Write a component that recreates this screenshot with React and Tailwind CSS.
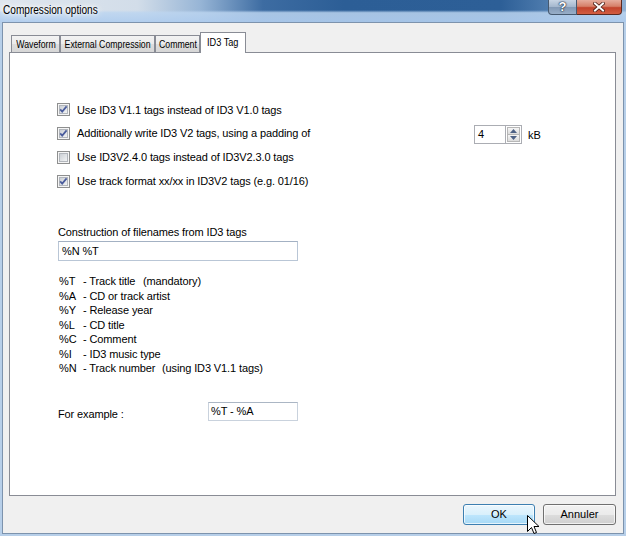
import React from 'react';

const FONT = "font-['Liberation_Sans',Arial,sans-serif]";

function CheckBox({ checked }) {
  return (
    <svg width="13" height="13" viewBox="0 0 13 13" className="shrink-0">
      <defs>
        <linearGradient id="cbg" x1="0" y1="0" x2="1" y2="1">
          <stop offset="0" stopColor="#c9cdd3" />
          <stop offset="1" stopColor="#f4f5f6" />
        </linearGradient>
      </defs>
      <rect x="0.5" y="0.5" width="12" height="12" fill="#f5f5f5" stroke="#8e8f8f" />
      <rect x="2.5" y="2.5" width="8" height="8" fill="url(#cbg)" stroke="#b2b6bc" />
      {checked && (
        <path d="M3.2 6.4 L5.2 8.6 L9.6 3.4" fill="none" stroke="#4a5c9c" strokeWidth="1.7" />
      )}
    </svg>
  );
}

function Tab({ label, width, selected }) {
  if (selected) {
    return (
      <div
        className={`relative z-10 -mb-px flex h-[21px] items-start justify-center border border-b-0 border-[#898c95] bg-white ${width}`}
      >
        <span className="mt-[2px] inline-block scale-x-[0.8] text-[11.5px] leading-[14px] whitespace-nowrap">
          {label}
        </span>
      </div>
    );
  }
  return (
    <div
      className={`flex h-[17px] items-start justify-center border border-b-0 border-[#898c95] bg-[linear-gradient(180deg,#f3f3f3,#ebebeb_50%,#dedede_51%,#d6d6d6)] ${width}`}
    >
      <span className="mt-[1px] inline-block scale-x-[0.76] text-[11.5px] leading-[14px] whitespace-nowrap">
        {label}
      </span>
    </div>
  );
}

function Spinner() {
  return (
    <div className="mt-[4px] flex h-[19px] self-start">
      <div className="h-full w-[31px] border border-r-0 border-[#abadb3] bg-white pl-[3px] text-[11px] leading-[17px]">
        4
      </div>
      <div className="flex h-full w-[17px] flex-col border border-[#abadb3] bg-white p-px">
        <div className="flex h-[8px] items-center justify-center border border-[#b7b7b7] bg-[linear-gradient(180deg,#f6f6f6,#dcdcdc)]">
          <svg width="7" height="4" viewBox="0 0 7 4">
            <path d="M0 4 L3.5 0 L7 4 Z" fill="#4d6185" />
          </svg>
        </div>
        <div className="flex h-[8px] items-center justify-center border border-t-0 border-[#b7b7b7] bg-[linear-gradient(180deg,#f6f6f6,#dcdcdc)]">
          <svg width="7" height="4" viewBox="0 0 7 4">
            <path d="M0 0 L3.5 4 L7 0 Z" fill="#4d6185" />
          </svg>
        </div>
      </div>
      <span className="ml-[6px] self-center text-[11px] leading-[14px]">kB</span>
    </div>
  );
}

const options = [
  { label: 'Use ID3 V1.1 tags instead of ID3 V1.0 tags', checked: true },
  { label: 'Additionally write ID3 V2 tags, using a padding of', checked: true, spinner: true },
  { label: 'Use ID3V2.4.0 tags instead of ID3V2.3.0 tags', checked: false },
  { label: 'Use track format xx/xx in ID3V2 tags (e.g. 01/16)', checked: true },
];

const codes = [
  ['%T', '- Track title', '(mandatory)', 'w-[60px]'],
  ['%A', '- CD or track artist'],
  ['%Y', '- Release year'],
  ['%L', '- CD title'],
  ['%C', '- Comment'],
  ['%I', '- ID3 music type'],
  ['%N', '- Track number', '(using ID3 V1.1 tags)', 'w-[79px]'],
];

export default function App() {
  return (
    <div className={`relative flex h-[536px] w-[626px] flex-col overflow-hidden bg-[#b7cfe9] pb-[2px] text-black ${FONT}`}>
      {/* Title bar */}
      <div className="flex h-[22px] shrink-0 items-start bg-[linear-gradient(180deg,rgba(255,255,255,0)_0%,rgba(255,255,255,0)_46%,rgba(188,213,240,0.85)_58%,rgba(176,205,238,0.92)_100%),linear-gradient(90deg,#dfe6ee_0%,#d2dde9_22%,#97b5d6_32%,#3d6ca2_42%,#2c5e96_55%,#2d5f97_80%,#5a86b6_90%,#8fb0d4_100%)]">
        <span className="mt-[3px] ml-[3px] inline-block origin-left scale-x-[0.84] text-[12px] leading-[14px] whitespace-nowrap [text-shadow:0_0_4px_#fff,0_0_8px_#fff,0_0_10px_#fff]">
          Compression options
        </span>
        <div className="mr-[4px] ml-auto flex">
          <div className="flex h-[15px] w-[29px] items-center justify-center rounded-bl-[4px] border border-t-0 border-[#46596f] bg-[linear-gradient(180deg,#c8d5e4,#a3b6cd_50%,#8299b5_52%,#98aec8)]">
            <span className="text-[13px] leading-[12px] font-bold text-white [text-shadow:0_0_1px_#1d2c40,0_0_1px_#1d2c40,0_0_2px_#1d2c40]">
              ?
            </span>
          </div>
          <div className="flex h-[15px] w-[45px] items-center justify-center rounded-br-[4px] border border-t-0 border-l-0 border-[#5c2a21] bg-[linear-gradient(180deg,#e6ad9e,#d68069_45%,#c2432c_55%,#d35e42)]">
            <svg width="12" height="10" viewBox="0 0 12 10">
              <path d="M2 1.5 L10 8.5 M10 1.5 L2 8.5" stroke="#4a1c14" strokeWidth="3.6" strokeLinecap="square" />
              <path d="M2 1.5 L10 8.5 M10 1.5 L2 8.5" stroke="#ffffff" strokeWidth="2" strokeLinecap="square" />
            </svg>
          </div>
        </div>
      </div>

      {/* Client area */}
      <div className="mx-[2px] flex flex-1 flex-col border border-[#7d93ad] bg-[#f0f0f0]">
        <div className="flex h-[29px] items-end pl-[8px]">
          <Tab label="Waveform" width="w-[49px]" />
          <Tab label="External Compression" width="w-[95px]" />
          <Tab label="Comment" width="w-[45px]" />
          <Tab label="ID3 Tag" width="w-[46px]" selected />
        </div>

        <div className="ml-[6px] h-[444px] w-[607px] border border-[#898c95] bg-white pt-[45px] pl-[47px] text-[11px] leading-[14px] tracking-[-0.12px]">
          {options.map((o, i) => (
            <div key={i} className={`flex items-center ${i === 0 ? 'h-[23px]' : 'h-[24px]'}`}>
              <CheckBox checked={o.checked} />
              <span className={`ml-[7px] whitespace-nowrap ${o.spinner ? 'w-[397px]' : ''}`}>{o.label}</span>
              {o.spinner && <Spinner />}
            </div>
          ))}

          <div className="mt-[32px] pl-[1px]">Construction of filenames from ID3 tags</div>
          <div className="mt-[2px] ml-[1px] h-[20px] w-[240px] border border-[#b9c6d6] border-t-[#a3b1c3] bg-white pl-[3px] leading-[18px]">
            %N %T
          </div>

          <div className="mt-[13px] pl-[2px] leading-[14.5px]">
            {codes.map(([c, d, extra, w]) => (
              <div key={c} className="flex whitespace-nowrap">
                <span className="w-[24px]">{c}</span>
                <span className={w || ''}>{d}</span>
                {extra && <span>{extra}</span>}
              </div>
            ))}
          </div>

          <div className="mt-[26px] flex h-[19px] items-start pl-[1px]">
            <span className="mt-[5px] w-[150px]">For example :</span>
            <div className="h-[19px] w-[90px] border border-[#c9d2dd] border-t-[#abb6c4] bg-white pl-[2px] leading-[17px]">
              %T - %A
            </div>
          </div>
        </div>

        <div className="mt-[8px] mr-[7px] flex justify-end gap-[8px] text-[11px]">
          <div className="flex h-[21px] w-[72px] items-center justify-center rounded-[3px] border border-[#3c7fb1] bg-[linear-gradient(180deg,#eaf6fd,#d9f0fc_50%,#bee6fd_51%,#a7d9f5)] shadow-[inset_0_0_0_1px_rgba(255,255,255,0.7)]">
            OK
          </div>
          <div className="flex h-[21px] w-[73px] items-center justify-center rounded-[3px] border border-[#707070] bg-[linear-gradient(180deg,#f2f2f2,#ebebeb_50%,#dddddd_51%,#cfcfcf)] shadow-[inset_0_0_0_1px_rgba(255,255,255,0.7)]">
            Annuler
          </div>
        </div>
      </div>

      {/* Mouse cursor */}
      <svg className="absolute top-[515px] left-[527px]" width="13" height="21" viewBox="0 0 13 21">
        <path
          d="M0.5 0.5 L0.5 16.5 L4.5 12.5 L7 18.5 L9.5 17.5 L7 11.5 L12 11.5 Z"
          fill="#ffffff"
          stroke="#000000"
          strokeLinejoin="miter"
        />
      </svg>
    </div>
  );
}
